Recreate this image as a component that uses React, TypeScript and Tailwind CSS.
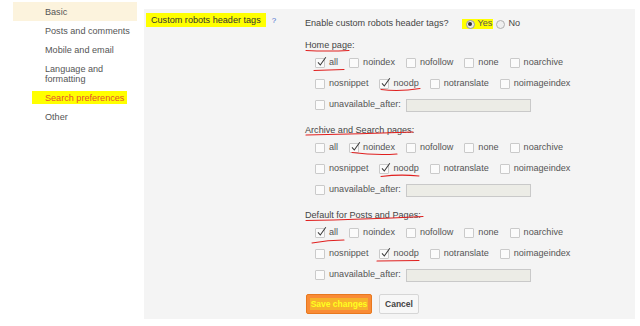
import React from "react";

const font = "font-['Liberation_Sans','Arial',sans-serif]";

const navItems = [
  { label: "Basic", active: true },
  { label: "Posts and comments" },
  { label: "Mobile and email" },
  { label: "Language and formatting", wrap: true },
  { label: "Search preferences", marked: true },
  { label: "Other" },
];

type Opt = { label: string; checked?: boolean };

function Checkbox({ checked }: { checked?: boolean }) {
  return (
    <span className="relative inline-block h-[10px] w-[10px] shrink-0 rounded-[1px] border border-[#cacaca] bg-[#fbfbfb]">
      {checked && (
        <svg className="absolute left-[0px] top-[-3px]" width="12" height="12" viewBox="0 0 12 12">
          <path d="M2 6.3 L4.3 9 L9.8 1.2" fill="none" stroke="#3a3a3a" strokeWidth="1.05" />
        </svg>
      )}
    </span>
  );
}

function Option({ label, checked }: Opt) {
  return (
    <span className="flex items-center gap-[4px]">
      <Checkbox checked={checked} />
      <span>{label}</span>
    </span>
  );
}

function Section({ title, row1, row2, first }: { title: string; row1: Opt[]; row2: Opt[]; first?: boolean }) {
  return (
    <div className={first ? "mt-[9px]" : "mt-[12px]"}>
      <div className="h-[12px] leading-[12px] text-[#444]">{title}</div>
      <div className="mt-[5px] flex h-[14px] items-center gap-[11px] pl-[10px] text-[#555]">
        {row1.map((o) => (
          <Option key={o.label} {...o} />
        ))}
      </div>
      <div className="mt-[7px] flex h-[14px] items-center gap-[11px] pl-[10px] text-[#555]">
        {row2.map((o) => (
          <Option key={o.label} {...o} />
        ))}
      </div>
      <div className="mt-[7px] flex h-[14px] items-center gap-[5px] pl-[10px] text-[#555]">
        <Option label="unavailable_after:" />
        <span className="h-[13px] w-[125px] border border-[#c9c9c9] bg-[#ececE6]" />
      </div>
    </div>
  );
}

const base1 = ["all", "noindex", "nofollow", "none", "noarchive"];
const base2 = ["nosnippet", "noodp", "notranslate", "noimageindex"];
const mk = (list: string[], on: string[]) => list.map((l) => ({ label: l, checked: on.includes(l) }));

export default function App() {
  return (
    <div className={`relative flex h-[326px] w-[640px] overflow-hidden bg-white text-[9.1px] ${font}`}>
      <aside className="w-[144px] shrink-0 pt-[2px] pl-[13px]">
        {navItems.map((item) => (
          <div
            key={item.label}
            className={`w-[124px] py-[4.5px] pl-[32px] leading-[10px] ${item.active ? "bg-[#fcf3dd]" : ""} ${
              item.marked ? "text-[#e4502c]" : "text-[#555]"
            }`}
          >
            {item.marked ? (
              <span className="-ml-[13px] bg-[#ffff00] py-[1.5px] pl-[13px] pr-[3px]">{item.label}</span>
            ) : item.wrap ? (
              <>
                Language and
                <br />
                formatting
              </>
            ) : (
              item.label
            )}
          </div>
        ))}
      </aside>

      <main className="mt-[9px] flex h-[310px] w-[491px] bg-[#f4f4f4]">
        <div className="w-[161px] shrink-0 pl-[2px] pt-[4px]">
          <span className="inline-block h-[14px] bg-[#ffff00] px-[5px] leading-[15px] text-[#333]">
            Custom robots header tags
          </span>
          <span className="ml-[6px] text-[8px] text-[#4a6fd0]">?</span>
        </div>

        <div className="pt-[9px]">
          <div className="flex h-[12px] items-center text-[#444]">
            <span>Enable custom robots header tags?</span>
            <span className="ml-[13px] flex h-[10px] items-center bg-[#ffff00] pl-[4px] pr-[1px] text-[#555]">
              <span className="flex h-[9px] w-[9px] items-center justify-center rounded-full border border-[#9a9a9a] bg-[#e8e8e8]">
                <span className="h-[4px] w-[4px] rounded-full bg-[#333]" />
              </span>
              <span className="ml-[3px]">Yes</span>
            </span>
            <span className="ml-[3px] h-[9px] w-[9px] rounded-full border border-[#b0b0b0] bg-[#efefef]" />
            <span className="ml-[3px]">No</span>
          </div>

          <Section first title="Home page:" row1={mk(base1, ["all"])} row2={mk(base2, ["noodp"])} />
          <Section title="Archive and Search pages:" row1={mk(base1, ["noindex"])} row2={mk(base2, ["noodp"])} />
          <Section title="Default for Posts and Pages:" row1={mk(base1, ["all"])} row2={mk(base2, ["noodp"])} />

          <div className="mt-[12px] flex gap-[7px] pl-[1px]">
            <button className="flex h-[20px] w-[66px] items-center justify-center rounded-[2px] border border-[#e8781e] bg-[#f98b36] text-[8.5px] font-bold">
              <span className="bg-[#f7b12b] px-[1px] text-[#ffff20]">Save changes</span>
            </button>
            <button className="flex h-[20px] w-[40px] items-center justify-center rounded-[2px] border border-[#d6d6d6] bg-[#f7f7f7] text-[8.5px] font-bold text-[#444]">
              Cancel
            </button>
          </div>
        </div>
      </main>

      <svg className="pointer-events-none absolute left-0 top-0" width="640" height="326" viewBox="0 0 640 326">
        <g fill="none" stroke="#e0201f" strokeWidth="1.1" strokeLinecap="round">
          <path d="M306 50.5 Q328 51.5 349 50.5" />
          <path d="M314 70.5 Q330 70 344 69.5" />
          <path d="M381 89.5 Q399 92 420 88.5" />
          <path d="M306 135 Q360 134 413 132" />
          <path d="M352 152.5 Q375 155.5 397 154" />
          <path d="M381 176.5 Q400 174 419 176" />
          <path d="M306 220.5 Q360 219.5 423 216.5" />
          <path d="M312 243 Q328 240 344 240" />
          <path d="M377 261 L419 260.5" />
        </g>
      </svg>
    </div>
  );
}
